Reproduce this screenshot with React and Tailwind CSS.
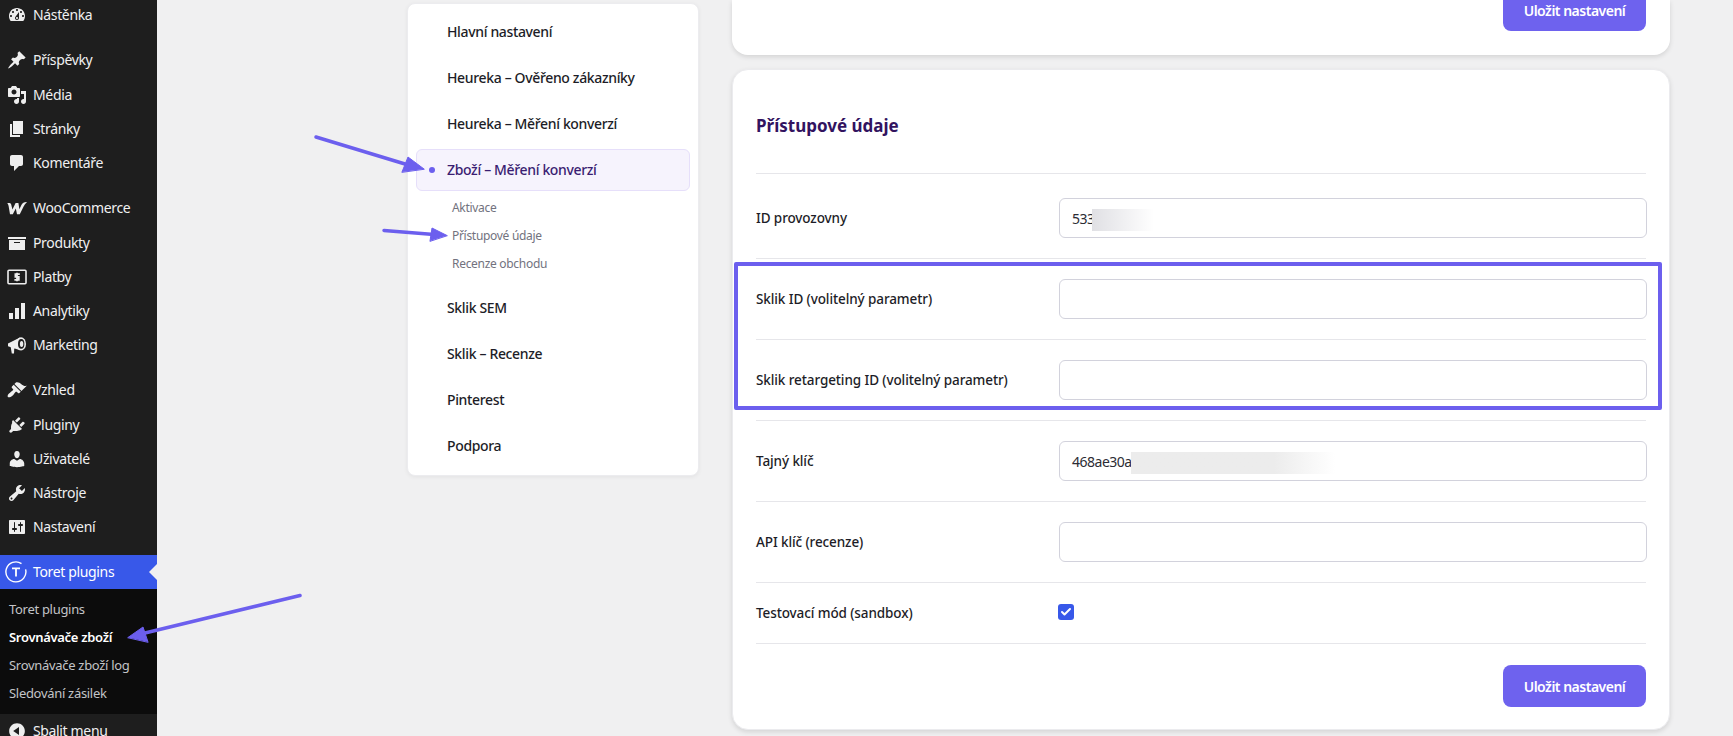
import React from 'react';
import { Check } from 'lucide-react';

const Icon = ({ d, children }) => (
  <svg viewBox="0 0 20 20" className="w-5 h-5 fill-current">
    {d && <path d={d} fillRule="evenodd" />}
    {children}
  </svg>
);

const icons = {
  dashboard: <Icon d="M3.76 16h12.48c1.1-1.37 1.76-3.11 1.76-5 0-4.42-3.58-8-8-8s-8 3.58-8 8c0 1.89.66 3.63 1.76 5zM10 4c.55 0 1 .45 1 1s-.45 1-1 1-1-.45-1-1 .45-1 1-1zM6 6c.55 0 1 .45 1 1s-.45 1-1 1-1-.45-1-1 .45-1 1-1zm8 0c.55 0 1 .45 1 1s-.45 1-1 1-1-.45-1-1 .45-1 1-1zm-5.37 5.55L12 7v6c0 1.1-.9 2-2 2s-2-.9-2-2c0-.57.24-1.08.63-1.45zM4 10c.55 0 1 .45 1 1s-.45 1-1 1-1-.45-1-1 .45-1 1-1zm12 0c.55 0 1 .45 1 1s-.45 1-1 1-1-.45-1-1 .45-1 1-1zm-5 3c0-.55-.45-1-1-1s-1 .45-1 1 .45 1 1 1 1-.45 1-1z" />,
  post: <Icon d="M10.44 3.02l1.82-1.82 6.36 6.35-1.83 1.82c-1.05-.68-2.48-.57-3.41.36l-.75.75c-.92.93-1.04 2.35-.35 3.41l-1.83 1.82-2.41-2.41-2.8 2.79c-.42.42-3.38 2.71-3.8 2.29s1.86-3.39 2.28-3.81l2.79-2.79L4.1 9.36l1.83-1.82c1.05.69 2.48.57 3.4-.36l.75-.75c.93-.92 1.05-2.35.36-3.41z" />,
  media: <Icon d="M13 11V4c0-.55-.45-1-1-1h-1.67L9 1H5L3.67 3H2c-.55 0-1 .45-1 1v7c0 .55.45 1 1 1h10c.55 0 1-.45 1-1zM7 4.5c1.38 0 2.5 1.12 2.5 2.5S8.38 9.5 7 9.5 4.5 8.38 4.5 7 5.62 4.5 7 4.5zM14 6h5v10.5c0 1.38-1.12 2.5-2.5 2.5S14 17.88 14 16.5s1.12-2.5 2.5-2.5c.17 0 .34.02.5.05V9h-3V6zm-4 8.05V13h2v3.5c0 1.38-1.12 2.5-2.5 2.5S7 17.88 7 16.5 8.12 14 9.5 14c.17 0 .34.02.5.05z" />,
  page: <Icon d="M6 15V2h10v13H6zm-1 1h8v2H3V5h2v11z" />,
  comments: <Icon d="M5 2h9c1.1 0 2 .9 2 2v7c0 1.1-.9 2-2 2h-2l-5 5v-5H5c-1.1 0-2-.9-2-2V4c0-1.1.9-2 2-2z" />,
  woo: (
    <svg viewBox="0 0 20 14" className="w-5 h-[14px]">
      <path d="M0.2 2.2c1.8-.4 3.6-.2 4 1.4l1.2 4.8L8.6 2h2.8l1 6.2 2-4.2C15.4 2 17.4 0.8 20 1c-1.6 1.6-2.6 3-3.4 4.6l-3.8 7.6H10L8.8 7.6l-3 5.6H3L1.6 5C1.4 3.8 1 3 .2 2.2z" fill="currentColor" />
    </svg>
  ),
  archive: <Icon d="M19 4v2H1V4h18zM2 7h16v10H2V7zm11 3V9H7v1h6z" />,
  payments: (
    <svg viewBox="0 0 20 20" className="w-5 h-5" fill="none" stroke="currentColor">
      <rect x="1" y="3.2" width="18" height="13.6" rx="1" strokeWidth="1.6" />
      <path d="M12.8 7.2H8.4v2.6h3.4v3H7.4M10 5.8v8.4" strokeWidth="1.8" />
    </svg>
  ),
  chart: <Icon d="M18 18V2h-4v16h4zm-6 0V7H8v11h4zm-6 0v-6H2v6h4z" />,
  marketing: (
    <svg viewBox="0 0 20 20" className="w-5 h-5">
      <path d="M1 8.4 13 2.6v12.6L1 11.2z" fill="currentColor" />
      <path d="M3.6 11.4l4.4 1-.8 1.6-.2 4.6H4.8z" fill="currentColor" />
      <ellipse cx="14" cy="8.9" rx="5" ry="6.6" fill="currentColor" />
      <ellipse cx="14.2" cy="8.9" rx="3.2" ry="4.8" fill="#1e1e1e" />
      <ellipse cx="14.6" cy="8.9" rx="1.7" ry="3" fill="currentColor" />
    </svg>
  ),
  appearance: <Icon d="M14.48 11.06L7.41 3.99l1.5-1.5c.5-.56 2.3-.47 3.51.32 1.21.8 1.43 1.28 2.91 2.1 1.18.64 2.45 1.26 4.45.85zm-.71.71L6.7 4.7 4.93 6.47c-.39.39-.39 1.02 0 1.41l1.06 1.06c.39.39.39 1.03 0 1.42-.6.6-1.43 1.11-2.21 1.69-.35.26-.7.53-1.01.84C1.43 13.26 0 15.9.95 16.97c.95 1.06 3.71-.45 5.04-1.78.31-.31.58-.66.84-1.01.58-.78 1.09-1.61 1.69-2.21.39-.39 1.03-.39 1.42 0l1.06 1.06c.39.39 1.02.39 1.41 0z" />,
  plugins: <Icon d="M13.11 4.36L9.87 7.6 8 5.73l3.24-3.24c.35-.34 1.05-.2 1.56.32.52.51.66 1.21.31 1.55zm-8 1.77l.91-1.12 9.01 9.01-1.19.84c-.71.71-2.63 1.16-3.82 1.16H6.14L4.9 17.26c-.59.59-1.54.59-2.12 0-.59-.58-.59-1.53 0-2.12l1.24-1.24v-1.88c0-1.19.45-3.11 1.09-3.89zm7.26 3.97l3.24-3.24c.34-.35 1.04-.21 1.55.31.52.51.66 1.21.31 1.55l-3.24 3.25z" />,
  users: <Icon d="M10 9.25c-2.27 0-2.73-3.44-2.73-3.44C7 4.02 7.82 2 9.97 2c2.16 0 2.98 2.02 2.71 3.81 0 0-.41 3.44-2.68 3.44zm0 2.57L12.72 10c2.39 0 4.52 2.33 4.52 4.53v2.49s-3.65 1.13-7.24 1.13c-3.65 0-7.24-1.13-7.24-1.13v-2.49c0-2.25 1.94-4.48 4.47-4.48z" />,
  tools: <Icon d="M16.68 9.77c-1.34 1.34-3.3 1.67-4.95.99l-5.41 6.52c-.99.99-2.59.99-3.58 0s-.99-2.59 0-3.57l6.52-5.42c-.68-1.65-.35-3.61.99-4.95 1.28-1.28 3.12-1.62 4.72-1.06l-2.89 2.89 2.82 2.82 2.86-2.87c.53 1.58.18 3.39-1.08 4.65zM3.81 16.21c.4.39 1.04.39 1.43 0 .4-.4.4-1.04 0-1.43-.39-.4-1.03-.4-1.43 0-.39.39-.39 1.03 0 1.43z" />,
  settings: <Icon d="M18 16V4c0-.55-.45-1-1-1H3c-.55 0-1 .45-1 1v12c0 .55.45 1 1 1h14c.55 0 1-.45 1-1zM8 11h1c.55 0 1 .45 1 1s-.45 1-1 1H8v1.5c0 .28-.22.5-.5.5s-.5-.22-.5-.5V13H6c-.55 0-1-.45-1-1s.45-1 1-1h1V5.5c0-.28.22-.5.5-.5s.5.22.5.5V11zm5-2h-1c-.55 0-1-.45-1-1s.45-1 1-1h1V5.5c0-.28.22-.5.5-.5s.5.22.5.5V7h1c.55 0 1 .45 1 1s-.45 1-1 1h-1v5.5c0 .28-.22.5-.5.5s-.5-.22-.5-.5V9z" />,
  toret: (
    <svg viewBox="0 0 22 22" className="w-[22px] h-[22px]" fill="none" stroke="currentColor">
      <path d="M16.5 2.6A10 10 0 1 0 20.6 8.4" strokeWidth="1.4" />
      <path d="M7 7.4h8M11 7.4v8" strokeWidth="1.8" />
    </svg>
  ),
  collapse: <Icon d="M10 2.16c4.33 0 7.84 3.51 7.84 7.84s-3.51 7.84-7.84 7.84S2.16 14.33 2.16 10 5.71 2.16 10 2.16zm2 11.72V6.12L6.18 9.97z" />,
};

const menuGroups = [
  [['dashboard', 'Nástěnka']],
  [['post', 'Příspěvky'], ['media', 'Média'], ['page', 'Stránky'], ['comments', 'Komentáře']],
  [['woo', 'WooCommerce'], ['archive', 'Produkty'], ['payments', 'Platby'], ['chart', 'Analytiky'], ['marketing', 'Marketing']],
  [['appearance', 'Vzhled'], ['plugins', 'Pluginy'], ['users', 'Uživatelé'], ['tools', 'Nástroje'], ['settings', 'Nastavení']],
];

const MenuItem = ({ icon, label }) => (
  <div className="flex items-center h-[34px] nth-[2]:h-[35px] text-[#f0f0f1]">
    <span className="w-[33px] flex justify-center shrink-0 text-[#eeeeee]">{icons[icon]}</span>
    <span className="pb-[1px]">{label}</span>
  </div>
);

const Sidebar = () => (
  <aside className="w-[157px] shrink-0 h-full bg-[#1e1e1e] text-[14px] tracking-[-0.35px] overflow-hidden">
    <div className="-mt-[2px] flex flex-col gap-[11px]">
      {menuGroups.map((group, i) => (
        <div key={i}>
          {group.map(([icon, label]) => <MenuItem key={label} icon={icon} label={label} />)}
        </div>
      ))}
    </div>
    <div className="mt-[11px] relative flex items-center h-[34px] bg-[#3858e9] text-white">
      <span className="w-[33px] flex justify-center shrink-0 -ml-[1px] mr-[1px]">{icons.toret}</span>
      <span className="pb-[1px]">Toret plugins</span>
      <span className="absolute right-0 top-[9px] border-y-[8px] border-y-transparent border-r-[8px] border-r-[#f0f0f1]" />
    </div>
    <div className="bg-[#0c0c0c] h-[125px] pt-[7px] text-[13px] tracking-[-0.3px] text-[#c3c4c7]">
      <div className="h-[28px] pl-[9px] flex items-center">Toret plugins</div>
      <div className="h-[28px] pl-[9px] flex items-center text-white font-semibold">Srovnávače zboží</div>
      <div className="h-[28px] pl-[9px] flex items-center">Srovnávače zboží log</div>
      <div className="h-[28px] pl-[9px] flex items-center">Sledování zásilek</div>
    </div>
    <MenuItem icon="collapse" label="Sbalit menu" />
  </aside>
);

const navTop = ['Hlavní nastavení', 'Heureka – Ověřeno zákazníky', 'Heureka – Měření konverzí'];
const navSub = ['Aktivace', 'Přístupové údaje', 'Recenze obchodu'];
const navBottom = ['Sklik SEM', 'Sklik – Recenze', 'Pinterest', 'Podpora'];

const SideNav = () => (
  <div className="w-[292px] mt-[3px] h-[473px] shrink-0 bg-white rounded-lg border border-[#ececef] shadow-[0_1px_4px_rgba(0,0,0,0.06)] pt-[5px] text-[14px] font-medium tracking-[-0.35px] text-[#1d1d27] box-border">
    {navTop.map((t) => (
      <div key={t} className="h-[46px] pl-[39px] pb-[2px] flex items-center">{t}</div>
    ))}
    <div className="relative mx-[8px] my-[2px] h-[42px] pl-[30px] pb-[2px] flex items-center rounded-md bg-[#f6f3fd] border border-[#e6dffa] text-[#3a1d72]">
      <span className="absolute left-[12px] top-[17px] w-[6px] h-[6px] rounded-full bg-[#6c5fee]" />
      Zboží – Měření konverzí
    </div>
    <div className="pt-[1px] pb-[7px] text-[12px] font-normal tracking-[-0.3px] text-[#72727e]">
      {navSub.map((t) => (
        <div key={t} className="h-[28px] pl-[44px] flex items-center">{t}</div>
      ))}
    </div>
    {navBottom.map((t) => (
      <div key={t} className="h-[46px] pl-[39px] pb-[2px] flex items-center">{t}</div>
    ))}
  </div>
);

const Field = ({ value, children }) => (
  <div className="relative w-[588px] h-[40px] shrink-0 rounded-md border border-[#d2d2dc] bg-white pl-[12px] flex items-center text-[14px] tracking-[-0.5px] text-[#2c2c34]">
    {value}
    {children}
  </div>
);

const Row = ({ label, className, children }) => (
  <div className={`flex items-center border-t border-[#e6e6ea] ${className}`}>
    <div className="w-[303px] shrink-0 text-[13.5px] font-medium tracking-[-0.1px] text-[#1d1d27]">{label}</div>
    {children}
  </div>
);

const SaveButton = ({ className }) => (
  <button className={`w-[143px] h-[42px] rounded-lg bg-[#6e62ee] text-white text-[14px] font-semibold tracking-[-0.5px] ${className}`}>
    Uložit nastavení
  </button>
);

const Settings = () => (
  <div className="w-[938px] ml-[33px] shrink-0">
    <div className="h-[55px] bg-white rounded-b-2xl shadow-[0_2px_5px_rgba(0,0,0,0.12)] pr-6 flex justify-end">
      <SaveButton className="-mt-[11px]" />
    </div>
    <div className="mt-[14px] h-[661px] bg-white rounded-2xl border border-[#ebebee] shadow-[0_2px_5px_rgba(0,0,0,0.12)] px-[23px] box-border">
      <h2 className="h-[103px] flex items-center pt-[9px] text-[17px] font-bold text-[#32135f]">Přístupové údaje</h2>
      <Row label="ID provozovny" className="h-[85px] pt-[4px]">
        <Field value="533">
          <span className="absolute left-[32px] top-[10px] w-[62px] h-[22px] bg-linear-to-r from-[#e0e0e4] to-white" />
        </Field>
      </Row>
      <Row label="Sklik ID (volitelný parametr)" className="h-[81px]"><Field /></Row>
      <Row label="Sklik retargeting ID (volitelný parametr)" className="h-[81px]"><Field /></Row>
      <Row label="Tajný klíč" className="h-[81px]">
        <Field value="468ae30a">
          <span className="absolute left-[71px] top-[10px] w-[204px] h-[22px] bg-linear-to-r from-[#ececec] via-[#ececec] via-70% to-white" />
        </Field>
      </Row>
      <Row label="API klíč (recenze)" className="h-[81px]"><Field /></Row>
      <Row label="Testovací mód (sandbox)" className="h-[61px]">
        <span className="w-4 h-4 -ml-[1px] -mt-[3px] rounded-[3px] bg-[#3858e9] flex items-center justify-center text-white">
          <Check size={12} strokeWidth={4} />
        </span>
      </Row>
      <div className="border-t border-[#e6e6ea] pt-[21px] flex justify-end">
        <SaveButton />
      </div>
    </div>
  </div>
);

const Annotations = () => (
  <>
    <div className="absolute left-[734px] top-[262px] w-[928px] h-[148px] border-4 border-[#6c5fee] rounded-[2px]" />
    <svg className="absolute inset-0 w-full h-full pointer-events-none" viewBox="0 0 1733 736">
      <g fill="#6c5fee" stroke="#6c5fee" strokeLinecap="round" strokeLinejoin="round">
        <path d="M316 137 L405 164" strokeWidth="3.5" fill="none" />
        <path d="M424 169 L408 157 L402 172 Z" strokeWidth="1" />
        <path d="M384 230.5 L434 234.5" strokeWidth="3.5" fill="none" />
        <path d="M447 235.5 L432 228 L430 241 Z" strokeWidth="1" />
        <path d="M300 595.5 L145 633" strokeWidth="3.5" fill="none" />
        <path d="M128 637.5 L143 627 L148 642 Z" strokeWidth="1" />
      </g>
    </svg>
  </>
);

export default function App() {
  return (
    <div className="relative flex w-[1733px] h-[736px] overflow-hidden bg-[#f0f0f1] font-['Noto_Sans',sans-serif]">
      <Sidebar />
      <div className="flex pl-[250px]">
        <SideNav />
        <Settings />
      </div>
      <Annotations />
    </div>
  );
}
